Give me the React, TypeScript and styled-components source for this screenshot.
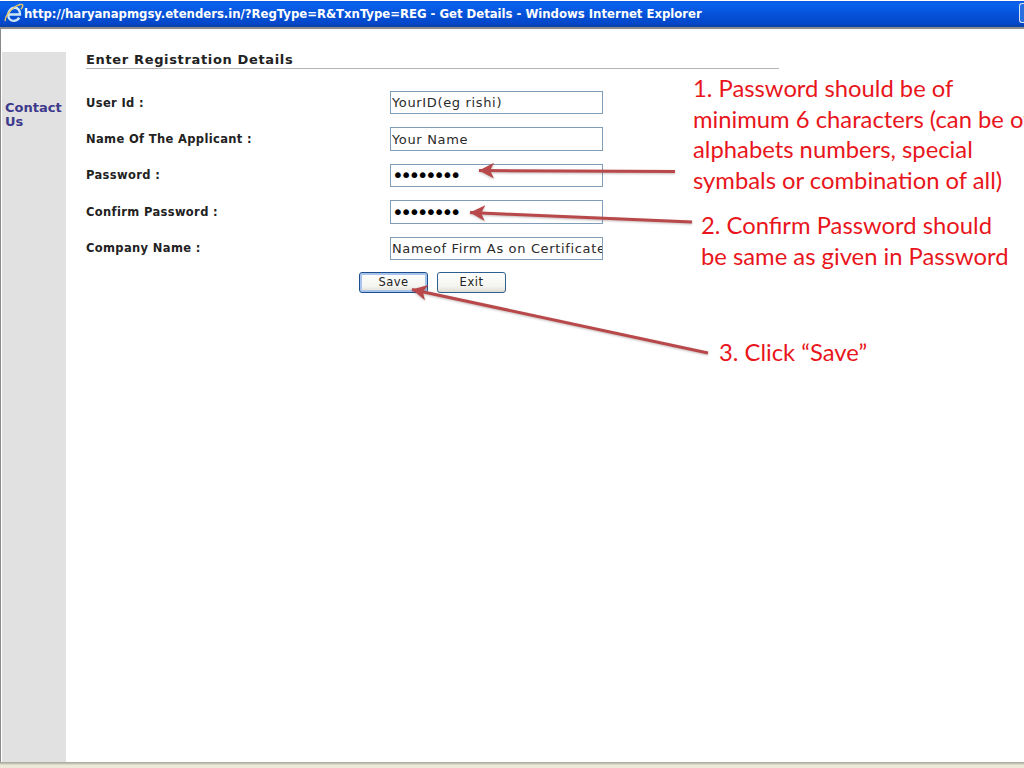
import React from 'react';
import styled, { createGlobalStyle } from 'styled-components';

const GlobalStyle = createGlobalStyle`
  html, body {
    margin: 0;
    padding: 0;
    height: 100%;
    background: #fff;
    overflow: hidden;
  }
`;

const Slide = styled.div`
  position: relative;
  width: 1024px;
  height: 768px;
  display: flex;
  flex-direction: column;
  overflow: hidden;
  background: #fff;
  font-family: "DejaVu Sans", Verdana, sans-serif;
`;

const TitleBar = styled.div`
  height: 29px;
  flex: none;
  box-sizing: border-box;
  display: flex;
  align-items: center;
  padding: 0 0 2px 4px;
  background: linear-gradient(to bottom, #0a5be0 0%, #0a63ee 12%, #0450d6 55%, #0448cb 85%, #0a3fa8 100%);
  border-bottom: 2px solid #8d8d8d;
  border-top: 1px solid #fff;
`;

const TitleText = styled.span`
  flex: 1;
  font-family: "DejaVu Sans Condensed", "DejaVu Sans", sans-serif;
  font-size: 13px;
  font-weight: 700;
  letter-spacing: -0.02px;
  color: #fff;
  white-space: nowrap;
`;

const CloseEdge = styled.div`
  width: 5px;
  height: 20px;
  box-sizing: border-box;
  border: 1px solid #d6e2f6;
  border-right: none;
  border-radius: 3px 0 0 3px;
  background: #2a6fe0;
`;

const Body = styled.div`
  flex: 1;
  display: flex;
  padding: 23px 0 0 1px;
  border-left: 1px solid #8a8a8a;
`;

const Sidebar = styled.aside`
  width: 64px;
  flex: none;
  box-sizing: border-box;
  padding-top: 49px;
  padding-left: 3px;
  background: #e1e1e1;
`;

const ContactLink = styled.a`
  display: block;
  font-size: 13px;
  line-height: 14px;
  font-weight: 700;
  color: #3d3a8c;
`;

const Main = styled.main`
  width: 693px;
  margin-left: 20px;
`;

const Heading = styled.h1`
  margin: 0;
  height: 16px;
  font-size: 13px;
  line-height: 15px;
  font-weight: 700;
  letter-spacing: 0.65px;
  color: #222;
  border-bottom: 1px solid #b4b4b4;
`;

const FormGrid = styled.div`
  display: grid;
  grid-template-columns: 304px 213px;
  grid-auto-rows: 23.4px;
  row-gap: 13px;
  margin-top: 22px;
  align-items: center;
`;

const FieldLabel = styled.label`
  font-size: 11.5px;
  font-weight: 700;
  letter-spacing: 0.35px;
  color: #222;
`;

const Field = styled.input`
  width: 213px;
  height: 23.4px;
  box-sizing: border-box;
  padding: 0 0 0 1px;
  border: 1px solid #7f9db9;
  outline: none;
  background: #fff;
  font-family: "DejaVu Sans", Verdana, sans-serif;
  font-size: 13px;
  letter-spacing: 0.65px;
  color: #2a2a2a;

  &[type='password'] {
    padding-left: 1px;
    font-size: 20px;
    letter-spacing: -3.55px;
    color: #000;
  }
`;

const ButtonRow = styled.div`
  display: flex;
  gap: 9px;
  margin: 12px 0 0 273px;
`;

const Button = styled.button<{ $focused?: boolean }>`
  width: 69px;
  height: 21px;
  padding: 0;
  border: 1px solid ${props => (props.$focused ? '#1d4f8f' : '#2f5f8f')};
  border-radius: 3px;
  background: linear-gradient(to bottom, #ffffff 0%, #f4f4f0 70%, #dedcd4 100%);
  box-shadow: ${props => (props.$focused ? 'inset 0 0 0 2px #a9c4ec' : 'none')};
  font-family: "DejaVu Sans", Verdana, sans-serif;
  font-size: 11.5px;
  letter-spacing: 0.5px;
  color: #222;
`;

const StatusEdge = styled.div`
  height: 6px;
  flex: none;
  background: linear-gradient(to bottom, #a6a69a 0, #c8c8ba 2px, #ece9d8 3px);
`;

const Note = styled.p<{ $x: number; $y: number }>`
  position: absolute;
  left: ${props => props.$x}px;
  top: ${props => props.$y}px;
  margin: 0;
  font-family: Lato, "Open Sans", sans-serif;
  font-size: 23.8px;
  line-height: 30.5px;
  color: #e8161c;
  white-space: pre;
`;

const ArrowLayer = styled.svg`
  position: absolute;
  left: 0;
  top: 0;
  pointer-events: none;
  filter: drop-shadow(0 1px 1px rgba(90, 60, 60, 0.35));
`;

const IeIcon = () => (
  <svg width="20" height="22" viewBox="0 0 20 22">
    <path d="M5 12.500h11c.3-4-2.200-6.800-5.300-6.800-3.600 0-6.400 3-6.400 7.200 0 3.400 2.200 6 5.400 6 2.400 0 4.300-1.100 5.500-3.200" fill="none" stroke="#cfe6f8" strokeWidth="2.4" />
    <path d="M1.500 19c-1.400-2.200 3.400-10.500 10-14.500 3.400-2 6.600-3 7.200-1.300.4 1.100-.6 2.800-1.700 4.100" fill="none" stroke="#e8c566" strokeWidth="1.4" />
  </svg>
);

const Arrow = ({ d }: { d: string }) => (
  <path d={d} fill="none" stroke="#b9484a" strokeWidth="3" markerStart="url(#head)" />
);

const fields = [
  { label: 'User Id :', value: 'YourID(eg rishi)', type: 'text' },
  { label: 'Name Of The Applicant :', value: 'Your Name', type: 'text' },
  { label: 'Password :', value: 'password', type: 'password' },
  { label: 'Confirm Password :', value: 'password', type: 'password' },
  { label: 'Company Name :', value: 'Nameof Firm As on Certificate', type: 'text' },
];

const App: React.FC = () => {
  return (
    <Slide>
      <GlobalStyle />
      <TitleBar>
        <IeIcon />
        <TitleText>http://haryanapmgsy.etenders.in/?RegType=R&amp;TxnType=REG - Get Details - Windows Internet Explorer</TitleText>
        <CloseEdge />
      </TitleBar>
      <Body>
        <Sidebar>
          <ContactLink>Contact<br />Us</ContactLink>
        </Sidebar>
        <Main>
          <Heading>Enter Registration Details</Heading>
          <FormGrid>
            {fields.map(field => (
              <React.Fragment key={field.label}>
                <FieldLabel>{field.label}</FieldLabel>
                <Field type={field.type} defaultValue={field.value} readOnly />
              </React.Fragment>
            ))}
          </FormGrid>
          <ButtonRow>
            <Button $focused>Save</Button>
            <Button>Exit</Button>
          </ButtonRow>
        </Main>
      </Body>
      <StatusEdge />
      <Note $x={693} $y={73}>{'1. Password should be of\nminimum 6 characters (can be of\nalphabets numbers, special\nsymbals or combination of all)'}</Note>
      <Note $x={701} $y={210}>{'2. Confirm Password should\nbe same as given in Password'}</Note>
      <Note $x={719} $y={337}>{'3. Click “Save”'}</Note>
      <ArrowLayer width="1024" height="768" viewBox="0 0 1024 768">
        <defs>
          <marker id="head" markerWidth="6" markerHeight="6" refX="0" refY="3" orient="auto">
            <path d="M0 3L5 0.400L3.700 3L5 5.600Z" fill="#b9484a" />
          </marker>
        </defs>
        <Arrow d="M479 170.500L675 171.500" />
        <Arrow d="M470 212.500L692 222" />
        <Arrow d="M412 289.500L708 353" />
      </ArrowLayer>
    </Slide>
  );
};

export default App;
